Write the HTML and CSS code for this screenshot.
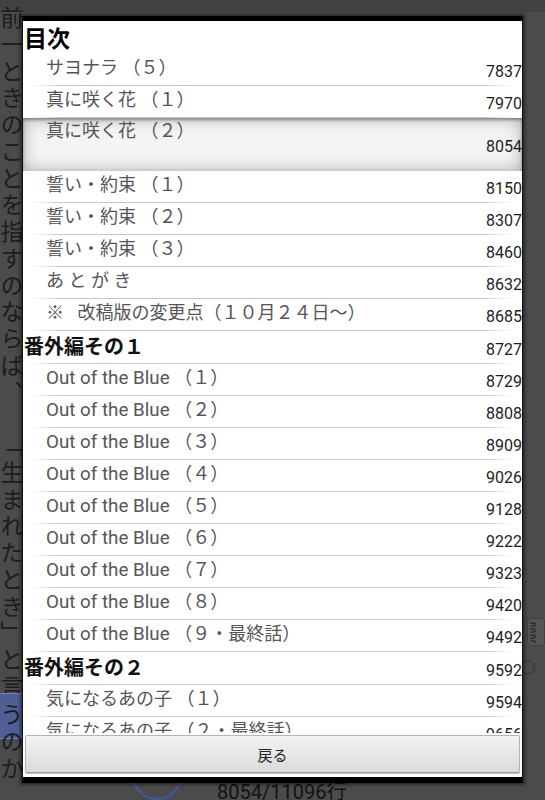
FILE: index.html
```html
<!DOCTYPE html>
<html lang="ja">
<head>
<meta charset="utf-8">
<title>目次</title>
<link rel="stylesheet" href="styles.css">
</head>
<body>
<div class="page">
  <div class="vcol">前一ときのことを指すのならば、　「生まれたとき」と言<span class="mark">う</span>のか</div>
  <div class="middle">
    <div class="statusbar">
      <span class="ring"></span>
      <span class="status">8054/11096行</span>
    </div>
  </div>
  <div class="rcol">
    <svg class="side-icon" width="18" height="28" viewBox="0 0 18 28">
      <rect x="0.5" y="0.5" width="17" height="27" rx="3" fill="#555" stroke="#404040"/>
      <path d="M3 5h5v3H3M3 11h5v3H3M3 17h5v3H3M3 23h5v2" fill="none" stroke="#1e1e1e" stroke-width="1"/>
    </svg>
    <span class="side-ring"></span>
  </div>
</div>

<div class="dialog">
  <div class="list">
    <div class="row head"><span class="t">目次</span></div>
    <div class="row sub"><span class="t">サヨナラ （５）</span><span class="n">7837</span></div>
    <div class="row sub"><span class="t">真に咲く花 （１）</span><span class="n">7970</span></div>
    <div class="row sub sel"><span class="t">真に咲く花 （２）</span><span class="n">8054</span></div>
    <div class="row sub"><span class="t">誓い・約束 （１）</span><span class="n">8150</span></div>
    <div class="row sub"><span class="t">誓い・約束 （２）</span><span class="n">8307</span></div>
    <div class="row sub"><span class="t">誓い・約束 （３）</span><span class="n">8460</span></div>
    <div class="row sub"><span class="t">あ と が き</span><span class="n">8632</span></div>
    <div class="row sub"><span class="t">※&nbsp;&nbsp;&nbsp;改稿版の変更点（１０月２４日〜）</span><span class="n">8685</span></div>
    <div class="row top"><span class="t">番外編その１</span><span class="n">8727</span></div>
    <div class="row sub"><span class="t"><span class="lat">Out of the Blue </span>（１）</span><span class="n">8729</span></div>
    <div class="row sub"><span class="t"><span class="lat">Out of the Blue </span>（２）</span><span class="n">8808</span></div>
    <div class="row sub"><span class="t"><span class="lat">Out of the Blue </span>（３）</span><span class="n">8909</span></div>
    <div class="row sub"><span class="t"><span class="lat">Out of the Blue </span>（４）</span><span class="n">9026</span></div>
    <div class="row sub"><span class="t"><span class="lat">Out of the Blue </span>（５）</span><span class="n">9128</span></div>
    <div class="row sub"><span class="t"><span class="lat">Out of the Blue </span>（６）</span><span class="n">9222</span></div>
    <div class="row sub"><span class="t"><span class="lat">Out of the Blue </span>（７）</span><span class="n">9323</span></div>
    <div class="row sub"><span class="t"><span class="lat">Out of the Blue </span>（８）</span><span class="n">9420</span></div>
    <div class="row sub"><span class="t"><span class="lat">Out of the Blue </span>（９・最終話）</span><span class="n">9492</span></div>
    <div class="row top"><span class="t">番外編その２</span><span class="n">9592</span></div>
    <div class="row sub"><span class="t">気になるあの子 （１）</span><span class="n">9594</span></div>
    <div class="row sub"><span class="t">気になるあの子 （２・最終話）</span><span class="n">9656</span></div>
  </div>
  <div class="btnbar"><button class="back">戻る</button></div>
</div>
</body>
</html>
```

FILE: styles.css
```css
* { box-sizing: border-box; }
html, body { margin: 0; padding: 0; }
body {
  width: 545px;
  height: 800px;
  overflow: hidden;
  background: #4a4a4a;
  font-family: Roboto, "Noto Sans CJK JP", sans-serif;
  text-spacing-trim: space-all;
}

/* background reader page */
.page {
  width: 545px;
  height: 800px;
  display: flex;
  background: linear-gradient(#424242 0, #424242 12px, #4b4b4b 12px);
}
.vcol {
  width: 24px;
  writing-mode: vertical-rl;
  font-family: "Noto Sans CJK JP", sans-serif;
  font-size: 23px;
  line-height: 24px;
  letter-spacing: 3.75px;
  color: #1c1c1c;
  padding-top: 6px;
  white-space: nowrap;
  text-spacing-trim: space-all;
}
.mark {
  background: #4f5f96;
  border: 1px solid #6a80c8;
  border-radius: 5px;
  padding: 9px 0;
  margin: -9px 0;
}
.middle {
  flex: 1;
  display: flex;
  flex-direction: column;
  justify-content: flex-end;
}
.statusbar {
  display: flex;
  align-items: flex-end;
  padding-left: 108px;
  gap: 35px;
}
.ring {
  width: 50px;
  height: 50px;
  border: 2px solid #3c5aa8;
  border-radius: 50%;
}
.status {
  font-size: 20px;
  line-height: 20px;
  color: #121212;
  margin-bottom: -2px;
}
.rcol {
  width: 18px;
  display: flex;
  flex-direction: column;
  align-items: flex-start;
  padding-top: 618px;
}
.side-icon { display: block; }
.side-ring {
  margin-top: 14px;
  width: 14px;
  height: 14px;
  border: 1px solid #333;
  border-radius: 50%;
  margin-left: -6px;
}

/* dialog */
.dialog {
  position: absolute;
  left: 22px;
  top: 16px;
  width: 501px;
  height: 767px;
  background: #fff;
  border-top: 5px solid #000;
  border-bottom: 6px solid #000;
  border-left: 1px solid #111;
  border-right: 1px solid #111;
  box-shadow: 0 0 3px 2px rgba(0, 0, 0, 0.45);
  display: flex;
  flex-direction: column;
}
.list {
  flex: 1;
  overflow: hidden;
}
.row {
  position: relative;
  height: 32px;
  display: flex;
  align-items: center;
  justify-content: space-between;
}
.row::after {
  content: "";
  position: absolute;
  left: 7px;
  right: 8px;
  bottom: 0;
  height: 1px;
  background: linear-gradient(to right, rgba(200,200,200,0), #c8c8c8 6%, #c8c8c8 94%, rgba(200,200,200,0));
}
.row .t {
  align-self: flex-start;
  line-height: 28px;
  white-space: nowrap;
}
.row .n {
  font-size: 16px;
  line-height: 20px;
  padding-top: 4px;
  color: #1e1e1e;
}
.head {
  height: 33px;
}
.head::after { display: none; }
.head .t {
  padding-left: 1px;
  padding-top: 5px;
  font-size: 23px;
  font-weight: bold;
  color: #000;
}
.sub .t {
  padding-left: 23px;
  font-size: 18px;
  color: #555;
}
.lat { font-size: 18.8px; }
.top {
  height: 33px;
}
.top .t {
  padding-left: 1px;
  padding-top: 2px;
  font-size: 20px;
  font-weight: bold;
  color: #111;
}
.sel {
  height: 53px;
  background: #f4f4f4;
  box-shadow: inset 0 2px 3px rgba(0, 0, 0, 0.35), inset 0 0 16px rgba(0, 0, 0, 0.32);
}
.sel::after { display: none; }
.sel .t { padding-top: 0; line-height: 26px; }

.btnbar {
  height: 44px;
  padding: 2px 2px 4px 2px;
  display: flex;
}
.back {
  flex: 1;
  margin: 0;
  border: 1px solid #b4b4b4;
  border-bottom-color: #9c9c9c;
  border-radius: 2px;
  background: linear-gradient(#f3f3f3, #dadada);
  box-shadow: 0 1px 1px rgba(0, 0, 0, 0.25);
  font-family: "Noto Sans CJK JP", sans-serif;
  font-size: 15px;
  color: #222;
  padding: 0;
}
```
